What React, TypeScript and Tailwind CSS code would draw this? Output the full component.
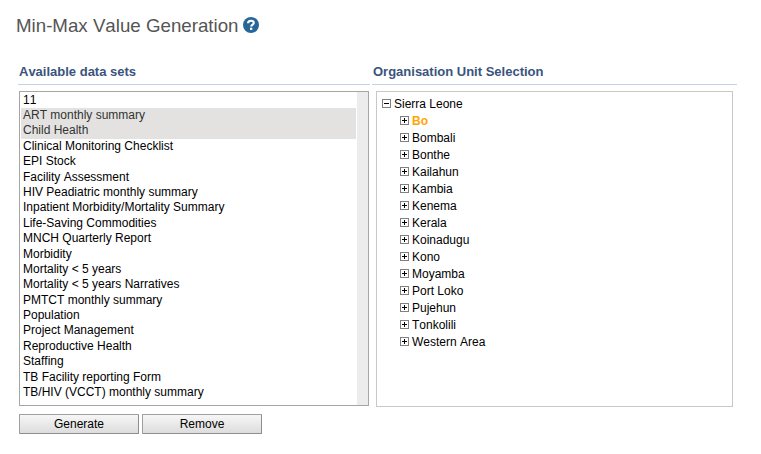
const dataSets = [
  '11',
  'ART monthly summary',
  'Child Health',
  'Clinical Monitoring Checklist',
  'EPI Stock',
  'Facility Assessment',
  'HIV Peadiatric monthly summary',
  'Inpatient Morbidity/Mortality Summary',
  'Life-Saving Commodities',
  'MNCH Quarterly Report',
  'Morbidity',
  'Mortality < 5 years',
  'Mortality < 5 years Narratives',
  'PMTCT monthly summary',
  'Population',
  'Project Management',
  'Reproductive Health',
  'Staffing',
  'TB Facility reporting Form',
  'TB/HIV (VCCT) monthly summary',
];

const selected = ['ART monthly summary', 'Child Health'];

const districts = [
  'Bo',
  'Bombali',
  'Bonthe',
  'Kailahun',
  'Kambia',
  'Kenema',
  'Kerala',
  'Koinadugu',
  'Kono',
  'Moyamba',
  'Port Loko',
  'Pujehun',
  'Tonkolili',
  'Western Area',
];

function Toggle({ open = false }: { open?: boolean }) {
  return (
    <svg width="9" height="9" viewBox="0 0 9 9" shapeRendering="crispEdges" className="shrink-0">
      <rect x="0.5" y="0.5" width="8" height="8" fill="#fff" stroke="#808080" />
      <rect x="2" y="4" width="5" height="1" fill="#000" />
      {!open && <rect x="4" y="2" width="1" height="5" fill="#000" />}
    </svg>
  );
}

function HelpIcon() {
  return (
    <svg width="16" height="16" viewBox="0 0 16 16" className="mt-[17px] shrink-0">
      <circle cx="8" cy="8" r="8" fill="#276696" />
      <path
        d="M5 6.2C5.1 4.5 6.3 3.7 8 3.7s2.8 0.9 2.8 2.2c0 1.7-2.6 1.6-2.6 3.7"
        fill="none"
        stroke="#fff"
        strokeWidth="2.1"
      />
      <rect x="7" y="10.7" width="2.3" height="2.2" fill="#fff" />
    </svg>
  );
}

function Button({ label }: { label: string }) {
  return (
    <button className="h-5 w-[120px] rounded-[1px] border border-[#a0a0a0] border-r-[#8e8e8e] border-b-[#8e8e8e] bg-linear-to-b from-[#f6f6f6] to-[#dddddd] text-center leading-[18px]">
      {label}
    </button>
  );
}

export default function App() {
  return (
    <div className="h-[454px] w-[761px] overflow-hidden bg-white font-['Liberation_Sans',Arial,sans-serif] text-xs text-black [font-kerning:none]">
      <header className="flex h-[60px] items-start pl-4">
        <h1 className="w-[227px] pt-[14px] text-[18.72px] leading-6 whitespace-nowrap text-[#555555]">
          Min-Max Value Generation
        </h1>
        <HelpIcon />
      </header>
      <main className="flex gap-0.5 pl-[18px]">
        <section className="w-[352px]">
          <h2 className="h-[25px] border-b border-[#c4d4e6] pl-px text-[13px] leading-6 font-bold text-[#39547d]">
            Available data sets
          </h2>
          <div className="mt-1.5 ml-px flex h-[315px] w-[350px] border border-[#a5a5a5]">
            <ul className="grow pt-[0.6px] pl-px">
              {dataSets.map((name) => (
                <li
                  key={name}
                  className={
                    selected.includes(name)
                      ? 'h-[15.4px] bg-[#e4e2e0] pl-0.5 leading-[15px] text-[#333333]'
                      : 'h-[15.4px] pl-0.5 leading-[15px]'
                  }
                >
                  {name}
                </li>
              ))}
            </ul>
            <div className="ml-px w-[11px] bg-[#ececec]" />
          </div>
          <div className="mt-2 ml-px flex gap-[3px]">
            <Button label="Generate" />
            <Button label="Remove" />
          </div>
        </section>
        <section className="w-[365px]">
          <h2 className="h-[25px] border-b border-[#c4d4e6] pl-px text-[13px] leading-6 font-bold text-[#39547d]">
            Organisation Unit Selection
          </h2>
          <div className="mt-1.5 ml-1 h-[316px] w-[357px] border border-[#c8c8c8] pt-[3px] pl-[5px]">
            <div className="flex h-[17px] items-center gap-[3px]">
              <Toggle open />
              <span>Sierra Leone</span>
            </div>
            <ul className="pl-[18px]">
              {districts.map((name) => (
                <li key={name} className="flex h-[17px] items-center gap-[3px]">
                  <Toggle />
                  <span className={name === 'Bo' ? 'font-bold text-[#ffa500]' : ''}>{name}</span>
                </li>
              ))}
            </ul>
          </div>
        </section>
      </main>
    </div>
  );
}
